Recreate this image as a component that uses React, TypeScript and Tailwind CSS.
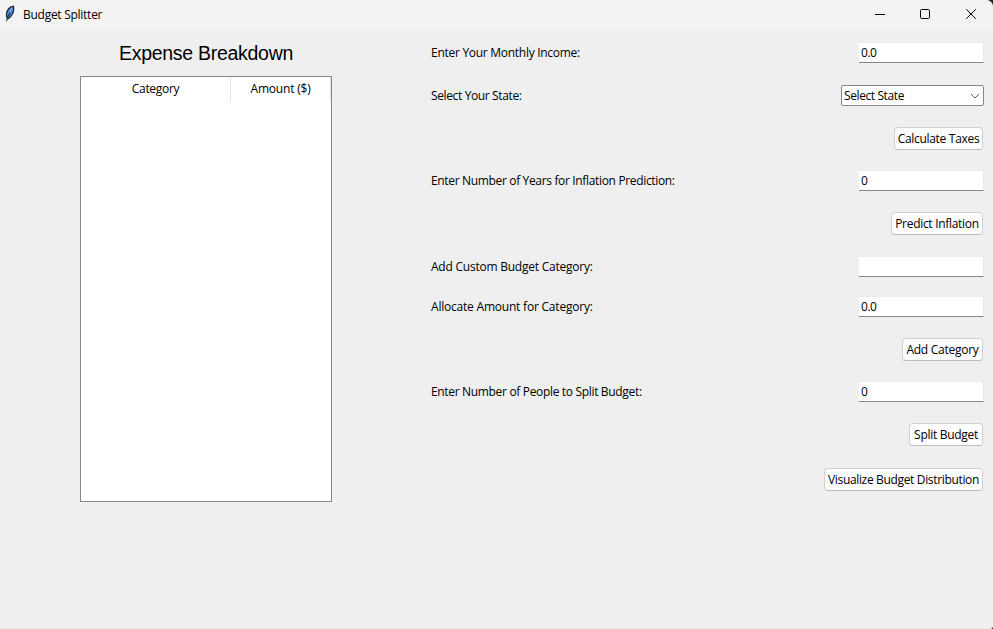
import React from "react";

const Field = ({ value }: { value: string }) => (
  <div className="-mr-px flex h-[21px] w-[125px] items-center border-t border-r border-b border-t-[#ebebeb] border-r-[#e8e8e8] border-b-[#868686] bg-white pl-[2px]">
    <span className="tracking-[-0.45px]">{value}</span>
  </div>
);

const Button = ({ className, textClass, children }: { className: string; textClass: string; children: string }) => (
  <button className={`flex h-[23px] items-center justify-center rounded-[4px] border border-[#d0d0d0] border-b-[#bcbcbc] bg-[#fdfdfd] ${className}`}>
    <span className={textClass}>{children}</span>
  </button>
);

const Row = ({ className, label, labelClass, children }: { className: string; label?: string; labelClass?: string; children: React.ReactNode }) => (
  <div className={`flex items-center ${className}`}>
    {label && <span className={labelClass}>{label}</span>}
    <div className="ml-auto">{children}</div>
  </div>
);

const Feather = () => (
  <svg className="mt-[5px] ml-[4px] h-[18px] w-[12px] shrink-0" viewBox="0 0 12 18">
    <path d="M3.2 13C1.5 9 3 5 6.5 2L9.5 1.3C10.3 6 8.5 10.5 4.5 13.5Z" fill="#4288de" stroke="#20252c" strokeWidth="1.2" />
    <path d="M7.8 3L5 8.5" stroke="#8fc0fa" strokeWidth="1" />
    <path d="M6.2 7.5C4.5 10 3.5 12 2.5 16" fill="none" stroke="#20252c" strokeWidth="1.1" />
  </svg>
);

export default function App() {
  return (
    <div className="bg-[#242424]">
      <div className="h-[629px] w-[993px] overflow-hidden rounded-tr-[7px] rounded-br-[3px] bg-[#efefef] font-['Open_Sans','Noto_Sans',sans-serif] text-[12px] leading-[16px] whitespace-nowrap text-black">
        <header className="flex h-[30px] bg-[#f3f3f3]">
          <Feather />
          <span className="mt-[7px] ml-[7px] tracking-[-0.27px]">Budget Splitter</span>
          <div className="mt-[9px] mr-[16px] ml-auto flex h-[11px] items-center gap-[35px]">
            <svg className="h-[11px] w-[11px]" viewBox="0 0 11 11"><path d="M1 5.5H11" stroke="black" /></svg>
            <svg className="h-[11px] w-[11px]" viewBox="0 0 11 11"><rect x="0.5" y="0.5" width="9" height="9" rx="1.2" fill="none" stroke="black" /></svg>
            <svg className="h-[11px] w-[11px]" viewBox="0 0 11 11"><path d="M0.2 0.2L9.8 9.8M9.8 0.2L0.2 9.8" stroke="black" /></svg>
          </div>
        </header>
        <main className="flex">
          <section className="ml-[80px] w-[252px] pt-[12px]">
            <h1 className="h-[34px] text-center font-['Liberation_Sans',Arial,sans-serif] text-[19.5px] leading-[22px] tracking-[-0.28px]">Expense Breakdown</h1>
            <div className="h-[426px] border border-[#828790] bg-white">
              <div className="flex h-[25px] text-center leading-[24px]">
                <div className="w-[150px] border-r border-[#e5e5e5]"><span className="tracking-[-0.3px]">Category</span></div>
                <div className="w-[100px] border-r border-[#e5e5e5]"><span className="tracking-[-0.2px]">Amount ($)</span></div>
              </div>
            </div>
          </section>
          <section className="ml-[99px] flex w-[552px] flex-col pt-[12px]">
            <Row className="h-[21px]" label="Enter Your Monthly Income:" labelClass="tracking-[-0.28px]"><Field value="0.0" /></Row>
            <Row className="mt-[22px] -mr-px h-[21px]" label="Select Your State:" labelClass="tracking-[-0.37px]">
              <div className="flex h-[21px] w-[143px] items-center justify-between rounded-[2px] border border-[#868686] bg-white pr-[3px] pl-[2px]">
                <span className="tracking-[-0.4px]">Select State</span>
                <svg className="h-[6px] w-[10px]" viewBox="0 0 10 6"><path d="M1 1L5 5L9 1" fill="none" stroke="#606060" /></svg>
              </div>
            </Row>
            <Row className="mt-[21px]"><Button className="w-[89px]" textClass="tracking-[-0.3px]">Calculate Taxes</Button></Row>
            <Row className="mt-[20px]" label="Enter Number of Years for Inflation Prediction:" labelClass="tracking-[-0.34px]"><Field value="0" /></Row>
            <Row className="mt-[21px]"><Button className="w-[92px]" textClass="tracking-[-0.3px]">Predict Inflation</Button></Row>
            <Row className="mt-[21px]" label="Add Custom Budget Category:" labelClass="tracking-[-0.23px]"><Field value="" /></Row>
            <Row className="mt-[19px]" label="Allocate Amount for Category:" labelClass="tracking-[-0.21px]"><Field value="0.0" /></Row>
            <Row className="mt-[21px]"><Button className="w-[81px]" textClass="tracking-[-0.27px]">Add Category</Button></Row>
            <Row className="mt-[20px]" label="Enter Number of People to Split Budget:" labelClass="tracking-[-0.33px]"><Field value="0" /></Row>
            <Row className="mt-[21px]"><Button className="w-[74px]" textClass="tracking-[-0.3px]">Split Budget</Button></Row>
            <Row className="mt-[22px]"><Button className="w-[159px]" textClass="tracking-[-0.34px]">Visualize Budget Distribution</Button></Row>
          </section>
        </main>
      </div>
    </div>
  );
}
